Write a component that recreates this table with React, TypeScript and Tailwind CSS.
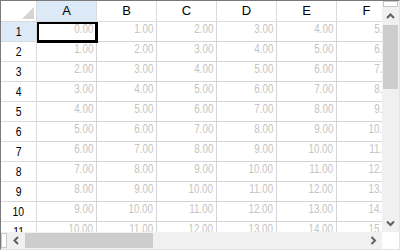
import React from "react";

const COLS = ["A", "B", "C", "D", "E", "F"];
const ROWS = Array.from({ length: 11 }, (_, i) => i + 1);

const numFont = {
  fontFamily: '"Liberation Sans Narrow", "Liberation Sans", Arial, sans-serif',
};

function Chevron({ dir }: { dir: "up" | "down" | "left" | "right" }) {
  const d = {
    up: "M1 5 L4.5 1.5 L8 5",
    down: "M1 1.5 L4.5 5 L8 1.5",
    left: "M5 1 L1.5 4.5 L5 8",
    right: "M1.5 1 L5 4.5 L1.5 8",
  }[dir];
  const horiz = dir === "up" || dir === "down";
  return (
    <svg
      width={horiz ? 9 : 7}
      height={horiz ? 7 : 9}
      viewBox={horiz ? "0 0 9 7" : "0 0 7 9"}
      className="block"
    >
      <path d={d} fill="none" stroke="#606060" strokeWidth="2" />
    </svg>
  );
}

export default function App() {
  return (
    <div className="w-[400px] h-[250px] bg-white overflow-hidden">
      <div className="w-[400px] h-[250px] flex flex-col border-t border-l border-t-[#7a7a7a] border-l-[#7a7a7a] border-r border-b border-r-[#e3e3e3] border-b-[#e3e3e3]">
        <div className="flex h-[231px]">
          {/* cell grid */}
          <div className="relative w-[381px] h-[231px] overflow-hidden">
            <div className="grid grid-cols-[36px_repeat(6,60px)] w-max">
              {/* corner */}
              <div className="relative h-[21px] border-r border-b border-[#dadada] bg-white">
                <svg width="12" height="12" className="absolute left-[21px] top-[6px]">
                  <polygon points="12,0 12,12 0,12" fill="#d4d4d4" />
                </svg>
              </div>
              {COLS.map((c, i) => (
                <div
                  key={c}
                  className={`h-[21px] flex items-center justify-center border-r border-b border-[#dadada] text-[13px] text-black ${
                    i === 0 ? "bg-[#dbeaf6]" : "bg-white"
                  }`}
                  style={{ fontFamily: '"Liberation Sans", Arial, sans-serif' }}
                >
                  {c}
                </div>
              ))}

              {ROWS.map((r) => (
                <React.Fragment key={r}>
                  <div
                    className={`h-5 flex items-center justify-center border-r border-b border-[#dadada] text-[13px] text-black ${
                      r === 1 ? "bg-[#dbeaf6]" : "bg-white"
                    }`}
                    style={numFont}
                  >
                    <span className="inline-block scale-x-[0.8]">{r}</span>
                  </div>
                  {COLS.map((c, ci) => (
                    <div
                      key={c}
                      className="h-5 border-r border-b border-[#d4d4d4] text-right pr-[3px] pt-[1px] text-[12px] leading-[12px] text-[#c4c4c4] whitespace-nowrap"
                      style={numFont}
                    >
                      <span className="inline-block origin-right scale-x-[0.82]">
                        {(r - 1 + ci).toFixed(2)}
                      </span>
                    </div>
                  ))}
                </React.Fragment>
              ))}
            </div>

            {/* active cell outline */}
            <div className="absolute left-[36px] top-[21px] w-[61px] h-[21px] border-t-2 border-l-2 border-r-[3px] border-b-[3px] border-black" />
          </div>

          {/* vertical scrollbar */}
          <div className="w-[17px] h-[231px] flex flex-col bg-[#f0f0f0]">
            <div className="h-[6px] mx-[1px] border border-[#c8c8c8] bg-white" />
            <div className="h-[18px] flex items-center justify-center">
              <Chevron dir="up" />
            </div>
            <div className="h-[64px] mx-[1px] bg-[#cdcdcd]" />
            <div className="flex-1" />
            <div className="h-[17px] flex items-center justify-center">
              <Chevron dir="down" />
            </div>
          </div>
        </div>

        {/* horizontal scrollbar */}
        <div className="flex h-[17px]">
          <div className="w-[381px] flex bg-[#f0f0f0]">
            <div className="w-[6px] my-[1px] border border-[#c8c8c8] bg-white" />
            <div className="w-[18px] flex items-center justify-center">
              <Chevron dir="left" />
            </div>
            <div className="w-[128px] my-[1px] bg-[#cdcdcd]" />
            <div className="flex-1" />
            <div className="w-[17px] flex items-center justify-center">
              <Chevron dir="right" />
            </div>
          </div>
          <div className="w-[17px] bg-white" />
        </div>
      </div>
    </div>
  );
}
